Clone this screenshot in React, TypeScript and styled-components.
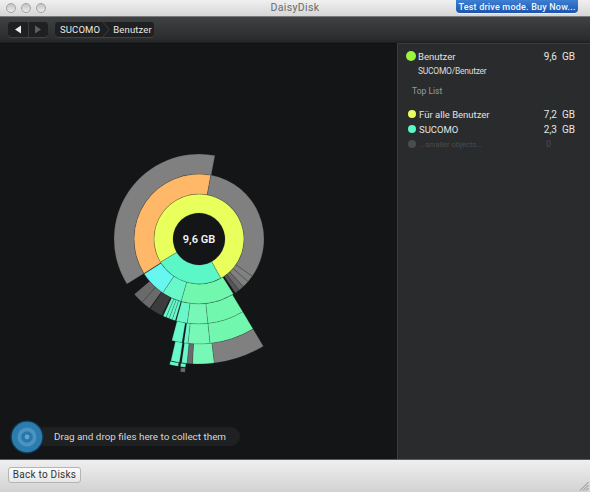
import React from "react";
import styled, { createGlobalStyle } from "styled-components";

const Global = createGlobalStyle`
  html, body { margin: 0; padding: 0; background: #141517; }
  #root { width: 590px; height: 492px; overflow: hidden; }
`;
const FONT = `Roboto, "Open Sans", "Liberation Sans", sans-serif`;

const Window = styled.div`
  width: 590px; height: 492px; display: flex; flex-direction: column;
  font-family: ${FONT}; font-size: 9.5px; overflow: hidden;
`;
const TitleBar = styled.header`
  height: 17px; box-sizing: border-box; flex: none; display: flex; align-items: flex-start; position: relative;
  background: linear-gradient(#f0f0f0, #d6d6d6);
  border-bottom: 1px solid #77797b;
`;
const Lights = styled.div`display: flex; gap: 5px; padding: 3px 0 0 6px;`;
const Light = styled.span`
  width: 10px; height: 10px; border-radius: 50%; background: linear-gradient(#c4c4c4, #ececec);
  border: 0.5px solid #a3a3a3; box-sizing: border-box;
`;
const Title = styled.div`
  flex: 1; text-align: center; color: #6a6a6a; font-size: 10.5px; line-height: 15px; letter-spacing: .35px; padding-right: 46px;
`;
const BuyButton = styled.button`
  position: absolute; right: 12px; top: 0; width: 122px; height: 13px; padding: 0; border: 0; white-space: nowrap;
  border-radius: 0 0 4px 4px; background: linear-gradient(#3d80d4, #1c54ad);
  color: #f2f6fb; font: 500 9px/12px ${FONT}; letter-spacing: .2px; box-shadow: 0 0.5px 0 #fff;
`;
const Toolbar = styled.div`
  height: 26px; box-sizing: border-box; flex: none; display: flex; align-items: flex-start; padding: 5px 0 0 8px; gap: 7px;
  background: linear-gradient(#3f4143, #2b2c2e 85%, #1f2022);
`;
const NavGroup = styled.div`
  display: flex; width: 40px; height: 15px; border-radius: 3px; overflow: hidden;
  background: #1f2022; box-shadow: 0 0.5px 0 #55575a;
`;
const NavCell = styled.div<{ $dim?: boolean }>`
  flex: 1; display: flex; align-items: center; justify-content: center;
  color: ${(p) => (p.$dim ? "#5c5e60" : "#eee")};
  & + & { border-left: 1px solid #3a3b3d; }
`;
const Crumbs = styled.div`
  display: flex; align-items: center; height: 15px; width: 99px; border-radius: 3px; box-sizing: border-box; padding-left: 5px;
  background: #1f2022; box-shadow: 0 0.5px 0 #55575a; color: #e8e8e8; font-size: 9.5px; line-height: 15px; letter-spacing: .15px;
`;
const CrumbArrow = styled.svg`width: 13px; height: 15px; flex: none;`;
const Main = styled.div`flex: 1; display: flex; min-height: 0;`;
const Canvas = styled.section`
  width: 397px; flex: none; display: flex; flex-direction: column; background: #141517;
  border-top: 1px solid #0f1011; box-sizing: border-box;
`;
const ChartArea = styled.div`flex: 1; display: flex; justify-content: center; padding-top: 50px;`;
const ChartSvg = styled.svg`width: 290px; height: 290px; flex: none;`;
const Hint = styled.div`display: flex; align-items: center; padding: 0 0 6px 10px; height: 33px;`;
const Target = styled.svg`width: 34px; height: 34px; flex: none; position: relative; z-index: 1;`;
const Pill = styled.div`
  width: 205px; height: 19px; margin-left: -9px; box-sizing: border-box; padding-left: 19px; border-radius: 10px;
  background: #1f2022; color: #d6d7d7; font-size: 9.9px; line-height: 19px; white-space: nowrap;
`;
const Side = styled.aside`
  flex: 1; background: #2a2b2d; border-left: 1px solid #3b3c3e; border-top: 1px solid #3a3b3d;
  padding: 6px 15px 0 8px; box-sizing: border-box; color: #dfdfdf;
`;
const HeadRow = styled.div`display: flex; align-items: center; height: 12px; gap: 2px;`;
const Dot = styled.span<{ $c: string; $big?: boolean }>`
  width: ${(p) => (p.$big ? 10 : 8)}px; height: ${(p) => (p.$big ? 10 : 8)}px; border-radius: 50%;
  background: ${(p) => p.$c}; flex: none; margin-left: ${(p) => (p.$big ? 0 : 2)}px; margin-right: ${(p) => (p.$big ? 0 : 1)}px;
`;
const Name = styled.span<{ $dim?: boolean }>`
  flex: 1; color: ${(p) => (p.$dim ? "#4c4d4f" : "#e2e2e2")}; font-size: ${(p) => (p.$dim ? 7.5 : 9.5)}px; white-space: nowrap;
`;
const Size = styled.span<{ $dim?: boolean }>`
  color: ${(p) => (p.$dim ? "#4c4d4f" : "#e6e6e6")}; font-size: ${(p) => (p.$dim ? 9 : 10)}px; white-space: pre;
  margin-right: ${(p) => (p.$dim ? "24px" : "0")};
`;
const PathLine = styled.div`margin: 3px 0 0 12px; font-size: 8.5px; line-height: 13px; letter-spacing: -.25px; color: #dcdcdc;`;
const SectionLabel = styled.div`margin: 7px 0 10px 6px; font-size: 8.5px; line-height: 13px; color: #9b9c9d;`;
const List = styled.div`display: flex; flex-direction: column; gap: 3px;`;
const Footer = styled.footer`
  height: 33px; flex: none; display: flex; align-items: flex-start; justify-content: space-between; padding: 7px 0 0 8px; box-sizing: border-box;
  background: linear-gradient(#efefef, #d2d2d2); border-top: 1px solid #5a5b5c;
`;
const BackButton = styled.button`
  width: 73px; height: 16px; padding: 0; border-radius: 3px; border: 1px solid #b4b4b4;
  background: linear-gradient(#fcfcfc, #e6e6e6); color: #333; font: 10px/14px ${FONT}; letter-spacing: .25px;
`;
const Grip = styled.svg`width: 10px; height: 10px; align-self: flex-end; margin: 0 1px 1px 0;`;

const C = 145;
function pt(r: number, a: number) {
  const t = (a * Math.PI) / 180;
  return `${(C + r * Math.sin(t)).toFixed(2)} ${(C - r * Math.cos(t)).toFixed(2)}`;
}
function sector(r0: number, r1: number, a0: number, a1: number) {
  const large = a1 - a0 > 180 ? 1 : 0;
  return `M${pt(r0, a0)}A${r0} ${r0} 0 ${large} 1 ${pt(r0, a1)}L${pt(r1, a1)}A${r1} ${r1} 0 ${large} 0 ${pt(r1, a0)}Z`;
}
const YEL = "#e8ff5c", ORA = "#ffb868", GRY = "#808080", DGR = "#3c3c3c", MGR = "#6a6a6a";
const TEA = "#5cf7c6", CYA = "#66f8f0", TE2 = "#68f8ca", GRN = "#72f7ae", GR2 = "#78f8b6";
type S = [number, number, number, number, string];
const segs: S[] = [
  [26, 45, 239, 511, YEL],
  [26, 45, 151, 239, TEA],
  [45, 65, 238, 370.5, ORA],
  [45, 65, 10.5, 125, GRY],
  [45, 65, 125, 131, GRY],
  [45, 65, 131, 137, GRY],
  [45, 65, 137, 142, MGR],
  [45, 65, 142, 146, "#565656"],
  [45, 65, 148, 196, GRN],
  [45, 65, 196, 214, TE2],
  [45, 65, 214, 237.5, CYA],
  [65, 85, 238, 370.8, GRY],
  [65, 85, 149, 174, GRN],
  [65, 85, 174, 188, GR2],
  [65, 85, 188, 195.5, TE2],
  [65, 85, 196.2, 198.4, TE2],
  [65, 85, 198.4, 200.6, TE2],
  [65, 85, 200.6, 202.8, TE2],
  [65, 85, 202.8, 205, TE2],
  [65, 85, 206, 215, DGR],
  [65, 85, 215.5, 222, MGR],
  [65, 85, 222, 229.5, MGR],
  [85, 105, 149, 174, GRN],
  [85, 105, 174, 186, GR2],
  [85, 105, 186, 188.3, TE2],
  [85, 105, 189.3, 195, TE2],
  [105, 125, 149, 173, GRY],
  [105, 125, 173, 183, GR2],
  [105, 125, 183, 185.5, MGR],
  [105, 125, 185.5, 188, TE2],
  [105, 125, 189, 193, TE2],
  [125.5, 129, 186, 188.3, TE2],
  [125.5, 129, 189.3, 193.2, TE2],
  [130, 134, 186, 188, MGR],
];

const chart = (
  <ChartSvg viewBox="0 0 290 290">
    {segs.map((s, i) => (
      <path key={i} d={sector(s[0], s[1], s[2], s[3])} fill={s[4]} stroke="#1c2a20" strokeOpacity={0.38} strokeWidth={0.5} />
    ))}
    <text x={C} y={C + 4} textAnchor="middle" fill="#f4f4f4" fontSize="11" fontWeight="600" fontFamily={`Roboto, sans-serif`}>9,6 GB</text>
  </ChartSvg>
);

export default function App() {
  return (
    <Window>
      <Global />
      <TitleBar>
        <Lights><Light /><Light /><Light /></Lights>
        <Title>DaisyDisk</Title>
        <BuyButton>Test drive mode. Buy Now...</BuyButton>
      </TitleBar>
      <Toolbar>
        <NavGroup>
          <NavCell>
            <svg width="8" height="9" viewBox="0 0 8 9"><path d="M7 0.5V8.5L1 4.5Z" fill="currentColor" /></svg>
          </NavCell>
          <NavCell $dim>
            <svg width="8" height="9" viewBox="0 0 8 9"><path d="M1 0.5V8.5L7 4.5Z" fill="currentColor" /></svg>
          </NavCell>
        </NavGroup>
        <Crumbs>
          SUCOMO
          <CrumbArrow viewBox="0 0 13 15"><path d="M3 0L9 7.5L3 15" fill="none" stroke="#3c3d3f" /></CrumbArrow>
          Benutzer
        </Crumbs>
      </Toolbar>
      <Main>
        <Canvas>
          <ChartArea>{chart}</ChartArea>
          <Hint>
            <Target viewBox="0 0 34 34">
              <circle cx="17" cy="17" r="16.5" fill="#123a55" />
              <circle cx="17" cy="17" r="15.2" fill="#2c7cb0" />
              <circle cx="17" cy="17" r="9.5" fill="#4b93c0" />
              <circle cx="17" cy="17" r="5.8" fill="#2a76a8" />
              <circle cx="17" cy="17" r="2.4" fill="#5fa6cf" />
            </Target>
            <Pill>Drag and drop files here to collect them</Pill>
          </Hint>
        </Canvas>
        <Side>
          <HeadRow><Dot $c="#99f53f" $big /><Name>Benutzer</Name><Size>9,6  GB</Size></HeadRow>
          <PathLine>SUCOMO/Benutzer</PathLine>
          <SectionLabel>Top List</SectionLabel>
          <List>
            <HeadRow><Dot $c="#e8ff5c" /><Name>Für alle Benutzer</Name><Size>7,2  GB</Size></HeadRow>
            <HeadRow><Dot $c="#5cf7c6" /><Name>SUCOMO</Name><Size>2,3  GB</Size></HeadRow>
            <HeadRow><Dot $c="#4a4b4d" /><Name $dim>...smaller objects...</Name><Size $dim>0</Size></HeadRow>
          </List>
        </Side>
      </Main>
      <Footer>
        <BackButton>Back to Disks</BackButton>
        <Grip viewBox="0 0 10 10"><path d="M1 9.5L9.5 1M4 9.5L9.5 4M7 9.5L9.5 7" stroke="#8a8a8a" strokeWidth="1" fill="none" /></Grip>
      </Footer>
    </Window>
  );
}
